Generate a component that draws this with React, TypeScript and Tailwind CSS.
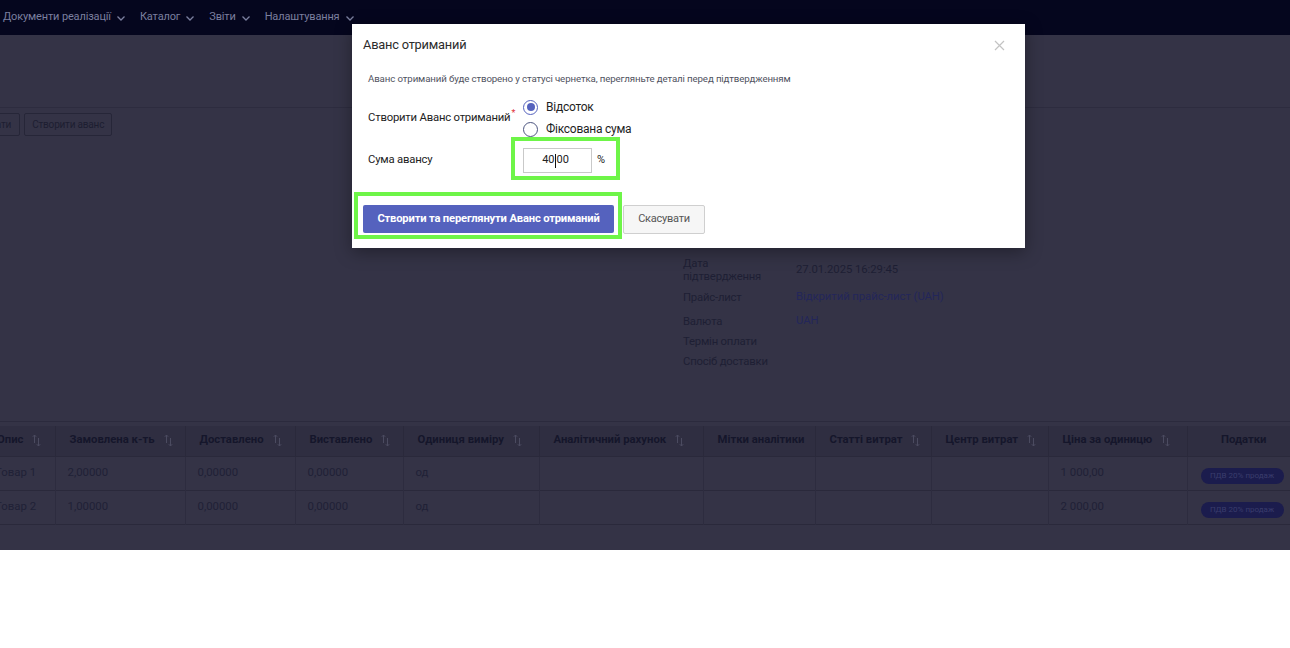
import React from "react";

const font = { fontFamily: 'Roboto, "Liberation Sans", sans-serif' };

const navItems = ["Документи реалізації", "Каталог", "Звіти", "Налаштування"];

const columns = [
  { title: "Опис", sort: true },
  { title: "Замовлена к-ть", sort: true },
  { title: "Доставлено", sort: true },
  { title: "Виставлено", sort: true },
  { title: "Одиниця виміру", sort: true },
  { title: "Аналітичний рахунок", sort: true },
  { title: "Мітки аналітики", sort: false },
  { title: "Статті витрат", sort: true },
  { title: "Центр витрат", sort: true },
  { title: "Ціна за одиницю", sort: true },
];

const widths = [72, 130, 110, 108, 136, 164, 112, 116, 117, 139, 113];

const rows = [
  ["Товар 1", "2,00000", "0,00000", "0,00000", "од", "", "", "", "", "1 000,00"],
  ["Товар 2", "1,00000", "0,00000", "0,00000", "од", "", "", "", "", "2 000,00"],
];

function Chevron() {
  return (
    <svg width="10" height="10" viewBox="0 0 10 10" className="ml-[5px]">
      <path d="M1.5 3.5 5 7l3.5-3.5" fill="none" stroke="currentColor" strokeWidth="1.3" />
    </svg>
  );
}

function SortIcon() {
  return (
    <svg width="9" height="13" viewBox="0 0 9 13" className="ml-[9px] shrink-0 text-[#4b4b60]">
      <path d="M2.5 9V1M0.8 2.8 2.5 1l1.7 1.8" fill="none" stroke="currentColor" strokeWidth="1" />
      <path d="M6.5 4v8M4.8 10.2 6.5 12l1.7-1.8" fill="none" stroke="currentColor" strokeWidth="1" />
    </svg>
  );
}

function InfoRow({ label, value, link, h }: { label: React.ReactNode; value?: string; link?: boolean; h: string }) {
  return (
    <div className={`flex items-center ${h}`}>
      <div className="w-[113px] text-[11.3px] leading-[13px] tracking-[-0.2px] text-[#1e1f34]">{label}</div>
      <div className={`text-[11.3px] tracking-[-0.05px] ${link ? "text-[#23265a]" : "text-[#1e1f34]"}`}>{value}</div>
    </div>
  );
}

function Radio({ checked, label }: { checked?: boolean; label: string }) {
  return (
    <div className="flex h-[22px] items-center">
      <span
        className={`flex h-[15px] w-[15px] items-center justify-center rounded-full border ${
          checked ? "border-[#5562be] border-[1.5px]" : "border-[#4d5580]"
        }`}
      >
        {checked && <span className="h-[8px] w-[8px] rounded-full bg-[#5562be]" />}
      </span>
      <span className="ml-[8px] text-[12px] tracking-[-0.25px] text-[#1f1f1f]">{label}</span>
    </div>
  );
}

function Modal() {
  return (
    <div className="absolute left-[352px] top-[24px] w-[673px] bg-white shadow-[0_4px_16px_rgba(0,0,0,0.35)]">
      <div className="flex h-[42px] items-center justify-between px-[11px]">
        <span className="text-[12.8px] tracking-[-0.2px] text-[#2b2b2b]">Аванс отриманий</span>
        <svg width="11" height="11" viewBox="0 0 11 11" className="mr-[9px]">
          <path d="M1 1l9 9M10 1 1 10" stroke="#c3c3c3" strokeWidth="1.2" />
        </svg>
      </div>
      <div className="px-[16px] pt-[6px]">
        <p className="text-[9.7px] leading-[14px] tracking-[-0.12px] text-[#4f5260]">
          Аванс отриманий буде створено у статусі чернетка, перегляньте деталі перед підтвердженням
        </p>
        <div className="mt-[10px] flex items-center">
          <div className="w-[155px] whitespace-nowrap text-[11.3px] tracking-[-0.2px] text-[#222]">
            Створити Аванс отриманий<sup className="ml-[1px] text-[9px] text-[#e0323c]">*</sup>
          </div>
          <div>
            <Radio checked label="Відсоток" />
            <Radio label="Фіксована сума" />
          </div>
        </div>
        <div className="mt-[8px] flex items-center">
          <div className="w-[155px] text-[11.3px] tracking-[-0.2px] text-[#222]">Сума авансу</div>
          <div className="flex h-[25px] w-[69px] items-center justify-center border border-[#c9c9c9] pr-[4px] text-[11px] text-[#222]">
            40<span className="mx-[0.5px] inline-block h-[14px] w-px bg-[#111]" />00
          </div>
          <span className="ml-[5px] text-[11px] text-[#222]">%</span>
        </div>
      </div>
      <div className="flex gap-[9px] px-[11px] pb-[14px] pt-[32px]">
        <button className="h-[28px] w-[251px] whitespace-nowrap rounded-[2px] bg-[#5562be] text-[11.2px] font-bold tracking-[-0.17px] text-white">
          Створити та переглянути Аванс отриманий
        </button>
        <button className="h-[29px] w-[82px] rounded-[2px] border border-[#cfcfcf] bg-[#f6f6f6] text-[11px] tracking-[-0.25px] text-[#555]">
          Скасувати
        </button>
      </div>
      <div className="pointer-events-none absolute left-[159px] top-[113px] h-[43px] w-[109px] border-[4px] border-[#6ef548]" />
      <div className="pointer-events-none absolute left-[2px] top-[168px] h-[47px] w-[268px] border-[4px] border-[#6ef548]" />
    </div>
  );
}

export default function App() {
  return (
    <div className="relative h-[550px] w-full overflow-hidden bg-[#343346]" style={font}>
      {/* top menu */}
      <div className="flex h-[35px] items-center bg-[#05061e] pl-[3px] text-[11px] tracking-[-0.15px] text-[#7b7f9f]">
        {navItems.map((item) => (
          <div key={item} className="mr-[14px] flex items-center">
            {item}
            <Chevron />
          </div>
        ))}
      </div>

      {/* control panel */}
      <div className="h-[73px] border-b border-[#2d2c3f]" />
      <div className="flex gap-[4px] pt-[5px]">
        <button className="-ml-[45px] h-[23px] rounded-[2px] border border-[#262638] px-[8px] text-[10px] tracking-[-0.2px] text-[#1d1e31]">
          Скасувати
        </button>
        <button className="h-[23px] rounded-[2px] border border-[#262638] px-[7px] text-[10px] tracking-[-0.2px] text-[#1d1e31]">
          Створити аванс
        </button>
      </div>

      {/* form sheet */}
      <div className="pl-[683px] pt-[118px]">
        <InfoRow
          h="h-[32px]"
          label={
            <>
              Дата
              <br />
              підтвердження
            </>
          }
          value="27.01.2025 16:29:45"
        />
        <InfoRow h="h-[23px]" label="Прайс-лист" value="Відкритий прайс-лист (UAH)" link />
        <InfoRow h="h-[24px]" label="Валюта" value="UAH" link />
        <InfoRow h="h-[16px]" label="Термін оплати" />
        <InfoRow h="h-[24px]" label="Спосіб доставки" />
      </div>

      {/* order lines */}
      <div className="mt-[48px] border-t border-[#2b2a3d] pt-[4px]">
        <table className="-ml-[17px] table-fixed border-collapse" style={{ width: 1317 }}>
          <colgroup>
            {widths.map((w, i) => (
              <col key={i} style={{ width: w }} />
            ))}
          </colgroup>
          <thead>
            <tr className="h-[30px] bg-[#2f2e41]">
              {columns.map((c) => (
                <th key={c.title} className="border-r border-[#2a293b] pl-[14px] text-left text-[11.3px] font-bold text-[#15162b]">
                  <div className="flex items-center whitespace-nowrap">
                    {c.title}
                    {c.sort && <SortIcon />}
                  </div>
                </th>
              ))}
              <th className="text-center text-[11.3px] font-bold text-[#15162b]">Податки</th>
            </tr>
          </thead>
          <tbody>
            {rows.map((r) => (
              <tr key={r[0]} className="h-[34px] border-y border-[#2a293b]">
                {r.map((cell, i) => (
                  <td key={i} className="border-r border-[#2d2c3f] pl-[12px] text-[11.4px] text-[#202136]">
                    {cell}
                  </td>
                ))}
                <td className="pl-[13px]">
                  <span className="inline-flex h-[16px] w-[83px] items-center justify-center rounded-full bg-[#1b1c4d] text-[8px] text-[#3a3d6c]">
                    ПДВ 20% продаж
                  </span>
                </td>
              </tr>
            ))}
          </tbody>
        </table>
      </div>

      <Modal />
    </div>
  );
}
